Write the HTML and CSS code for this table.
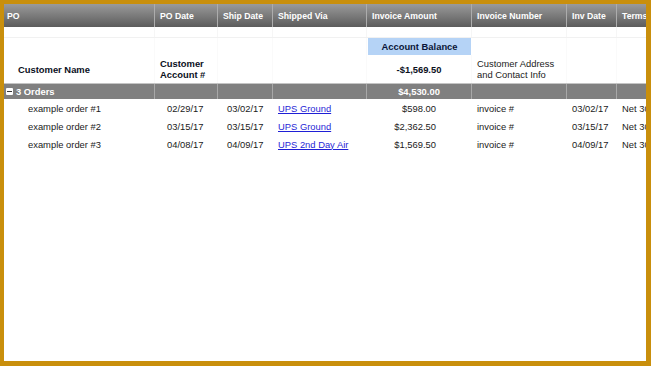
FILE: index.html
```html
<!DOCTYPE html>
<html>
<head>
<meta charset="utf-8">
<link rel="stylesheet" href="styles.css">
</head>
<body>
<div class="frame">
  <div class="sheet">
    <div class="row head">
      <div class="c">PO</div>
      <div class="c">PO Date</div>
      <div class="c">Ship Date</div>
      <div class="c">Shipped Via</div>
      <div class="c">Invoice Amount</div>
      <div class="c">Invoice Number</div>
      <div class="c">Inv Date</div>
      <div class="c">Terms</div>
    </div>
    <div class="row spacer">
      <div class="c"></div><div class="c"></div><div class="c"></div><div class="c"></div>
      <div class="c"></div><div class="c"></div><div class="c"></div><div class="c"></div>
    </div>
    <div class="row balance">
      <div class="c"></div><div class="c"></div><div class="c"></div><div class="c"></div>
      <div class="c label">Account Balance</div>
      <div class="c"></div><div class="c"></div><div class="c"></div>
    </div>
    <div class="row cust">
      <div class="c bold name">Customer Name</div>
      <div class="c bold acct">Customer<br>Account #</div>
      <div class="c"></div>
      <div class="c"></div>
      <div class="c bold amt">-$1,569.50</div>
      <div class="c addr">Customer Address<br>and Contact Info</div>
      <div class="c"></div>
      <div class="c"></div>
    </div>
    <div class="row group">
      <div class="c"><span class="minus"></span>3 Orders</div>
      <div class="c"></div>
      <div class="c"></div>
      <div class="c"></div>
      <div class="c total">$4,530.00</div>
      <div class="c"></div>
      <div class="c"></div>
      <div class="c"></div>
    </div>
    <div class="row data">
      <div class="c po">example order #1</div>
      <div class="c d1">02/29/17</div>
      <div class="c d2">03/02/17</div>
      <div class="c via"><a href="#">UPS Ground</a></div>
      <div class="c money">$598.00</div>
      <div class="c inv">invoice #</div>
      <div class="c idate">03/02/17</div>
      <div class="c terms">Net 30</div>
    </div>
    <div class="row data">
      <div class="c po">example order #2</div>
      <div class="c d1">03/15/17</div>
      <div class="c d2">03/15/17</div>
      <div class="c via"><a href="#">UPS Ground</a></div>
      <div class="c money">$2,362.50</div>
      <div class="c inv">invoice #</div>
      <div class="c idate">03/15/17</div>
      <div class="c terms">Net 30</div>
    </div>
    <div class="row data">
      <div class="c po">example order #3</div>
      <div class="c d1">04/08/17</div>
      <div class="c d2">04/09/17</div>
      <div class="c via"><a href="#">UPS 2nd Day Air</a></div>
      <div class="c money">$1,569.50</div>
      <div class="c inv">invoice #</div>
      <div class="c idate">04/09/17</div>
      <div class="c terms">Net 30</div>
    </div>
  </div>
</div>
</body>
</html>
```

FILE: styles.css
```css
html, body {
  margin: 0;
  padding: 0;
  background: #c98f0c;
}
* { box-sizing: border-box; }
.frame {
  width: 651px;
  height: 366px;
  border-style: solid;
  border-color: #c98f0c;
  border-width: 4px 5px 5px 4px;
  background: #fff;
  overflow: hidden;
}
.sheet {
  width: 700px;
  font-family: "Liberation Sans", Arial, sans-serif;
  font-size: 9.4px;
  color: #111;
}
.row {
  display: grid;
  grid-template-columns: 151px 63px 55px 94px 105px 95px 50px 67px;
}
.c {
  white-space: nowrap;
  overflow: hidden;
  display: flex;
  align-items: center;
}
.head {
  height: 23px;
  background: linear-gradient(#9a9a9a, #5c5c5c);
  color: #fff;
  font-weight: bold;
  font-size: 8.7px;
}
.head .c {
  border-right: 1px solid #acacac;
  padding-left: 5px;
}
.head .c:first-child { padding-left: 3px; }
.spacer {
  height: 11px;
  border-bottom: 1px solid #f1f1f1;
}
.spacer .c {
  border-right: 1px solid #f6f6f6;
}
.balance .c, .cust .c {
  border-right: 1px solid #fafafa;
}
.balance {
  height: 17px;
}
.balance .label {
  background: #b5d3f6;
  color: #0a1638;
  font-weight: bold;
  justify-content: center;
  margin: 0 1px;
  border-right: none;
}
.cust {
  height: 28px;
  line-height: 11px;
}
.bold {
  font-weight: bold;
  color: #0a0f1c;
}
.name { padding-left: 14px; }
.acct { padding-left: 5px; }
.amt { justify-content: center; }
.addr { padding-left: 5px; color: #222; }
.group {
  height: 16px;
  background: #808080;
  border-top: 1px solid #c4c4c4;
  color: #fff;
  font-weight: bold;
}
.group .c {
  border-right: 1px solid #a8a8a8;
}
.group .c:first-child { padding-left: 2px; }
.minus {
  width: 7px;
  height: 7px;
  background: #fff;
  border-radius: 1px;
  margin-right: 3px;
  position: relative;
}
.minus::after {
  content: "";
  position: absolute;
  left: 1px;
  right: 1px;
  top: 3px;
  height: 1px;
  background: #333;
}
.total { justify-content: center; }
.data {
  height: 18px;
  color: #1a1a1a;
}
.po { padding-left: 24px; }
.d1 { padding-left: 12px; }
.d2 { padding-left: 9px; }
.via { padding-left: 5px; }
.via a { color: #1f1fd6; text-decoration: underline; }
.money { justify-content: flex-end; padding-right: 36px; }
.inv { padding-left: 5px; }
.idate { padding-left: 5px; }
.terms { padding-left: 5px; }
```
